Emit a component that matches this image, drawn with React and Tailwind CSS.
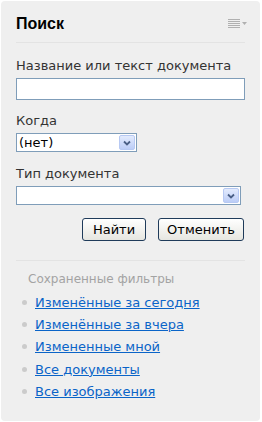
const font = { fontFamily: '"DejaVu Sans", Verdana, sans-serif' };

const Arrow = () => (
  <span className="flex items-center justify-center w-[16px] h-[15px] mr-px rounded-[2px] border border-[#b7c9f3] bg-linear-to-b from-[#e3ebfd] to-[#bccdf7]">
    <svg width="8" height="6" viewBox="0 0 8 6">
      <path d="M1 1.5l3 3 3-3" stroke="#4a5f86" strokeWidth="1.8" fill="none" />
    </svg>
  </span>
);

const SelectBox = ({ value, className }) => (
  <div className={`flex items-center h-[19px] border border-[#7f9db9] bg-white ${className}`}>
    <span className="flex-1 pl-[2px] text-[13px] leading-none text-black">{value}</span>
    <Arrow />
  </div>
);

const Btn = ({ children, className }) => (
  <button className={`h-[23px] border border-[#1f3b5a] rounded-[3px] bg-linear-to-b from-white to-[#e6e6e0] text-[13px] text-black leading-none ${className}`}>
    {children}
  </button>
);

const links = [
  'Изменённые за сегодня',
  'Изменённые за вчера',
  'Измененные мной',
  'Все документы',
  'Все изображения',
];

export default function App() {
  return (
    <div className="w-[262px] h-[422px] bg-white p-px" style={font}>
      <div className="w-[259px] h-[420px] bg-[#efefef] rounded-[4px] px-[15px]">
        <div className="flex items-center justify-between h-[42px] pt-[4px] border-b border-[#e3e3e3]">
          <h2 className="text-[16px] font-bold text-black" style={{ fontFamily: '"Liberation Sans", Arial, sans-serif' }}>Поиск</h2>
          <div className="flex items-start gap-[2px] mr-[-2px]">
            <div className="flex flex-col gap-px w-[12px]">
              <span className="h-px bg-[#b0b0b0]" />
              <span className="h-px bg-[#b0b0b0]" />
              <span className="h-px bg-[#b0b0b0]" />
              <span className="h-px bg-[#b0b0b0]" />
              <span className="h-px bg-[#b0b0b0]" />
            </div>
            <svg width="5" height="3" viewBox="0 0 5 3" className="mt-[3px]">
              <path d="M0 0h5L2.5 3z" fill="#b0b0b0" />
            </svg>
          </div>
        </div>

        <div className="pt-[15px] text-[13px] text-[#333]">
          <label className="block leading-[16px]">Название или текст документа</label>
          <div className="mt-[4px] h-[22px] border border-[#7f9db9] bg-white" />

          <label className="block mt-[13px] leading-[16px]">Когда</label>
          <SelectBox value="(нет)" className="mt-[4px] w-[121px]" />

          <label className="block mt-[14px] leading-[16px]">Тип документа</label>
          <SelectBox value="" className="mt-[4px] w-[225px]" />

          <div className="flex justify-end gap-[12px] mt-[13px] pr-[1px]">
            <Btn className="w-[64px]">Найти</Btn>
            <Btn className="w-[86px]">Отменить</Btn>
          </div>
        </div>

        <div className="mt-[19px] border-t border-[#e3e3e3] pt-[11px]">
          <div className="pl-[12px] text-[12px] text-[#a3a3a3] leading-[14px]">Сохраненные фильтры</div>
          <ul className="mt-[5px]">
            {links.map((l) => (
              <li key={l} className="flex items-center h-[22.3px]">
                <span className="w-[5px] h-[5px] rounded-full bg-[#cbcbcb] ml-[6px] mr-[8px]" />
                <a href="#" className="text-[13px] text-[#0a64c8] underline leading-none">{l}</a>
              </li>
            ))}
          </ul>
        </div>
      </div>
    </div>
  );
}
